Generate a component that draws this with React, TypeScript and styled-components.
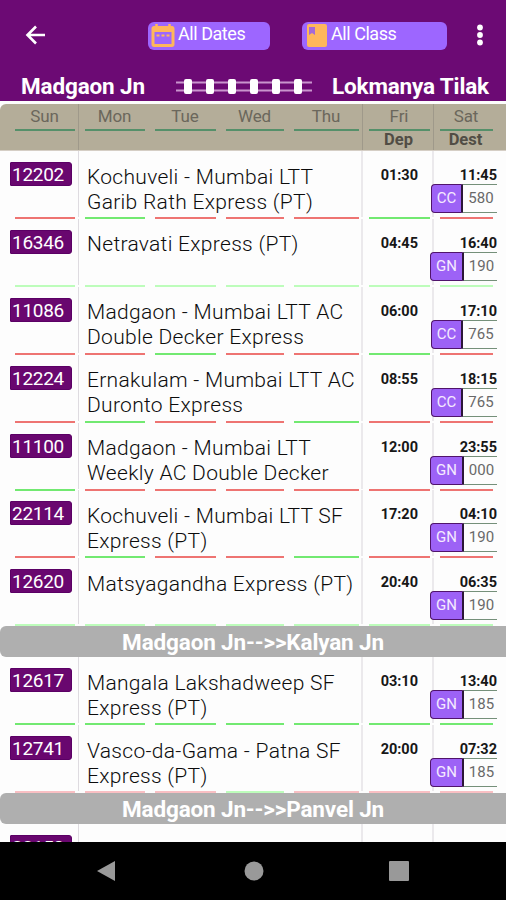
import React from 'react';
import styled, { createGlobalStyle } from 'styled-components';

const Global = createGlobalStyle`
  * { box-sizing: border-box; }
  body { margin: 0; background: #fdfdfd; font-family: Roboto, "Liberation Sans", sans-serif; }
`;

const Screen = styled.div`
  width: 506px;
  height: 900px;
  display: flex;
  flex-direction: column;
  overflow: hidden;
  background: #fdfdfd;
`;

const Header = styled.header`
  flex: none;
  height: 101px;
  background: #6c0a74;
  color: #fff;
`;

const Toolbar = styled.div`
  height: 70px;
  display: flex;
  align-items: flex-start;
  padding: 22px 16px 0 25px;
`;

const BackIcon = styled.svg`
  flex: none;
  width: 21px;
  height: 21px;
  margin: 3px 102px 0 0;
`;

const FilterButton = styled.div<{ $width: number; $gap: number }>`
  flex: none;
  display: flex;
  width: ${(p) => p.$width}px;
  height: 28px;
  margin-right: 32px;
  padding-left: 3px;
  gap: ${(p) => p.$gap}px;
  border-radius: 6px;
  background: #9d66ff;
  font-size: 18px;
  letter-spacing: -0.45px;
  line-height: 24px;
  white-space: nowrap;
`;

const FilterIcon = styled.svg`
  flex: none;
  width: 24px;
  height: 26px;
`;

const FilterLabel = styled.span`
  width: 80px;
`;

const MoreIcon = styled.svg`
  flex: none;
  width: 6px;
  height: 22px;
  margin: 2px 0 0 -2px;
`;

const RouteBar = styled.div`
  display: grid;
  grid-template-columns: 155px 1fr auto;
  align-items: center;
  height: 31px;
  padding: 0 17px 0 21px;
  font-size: 22.5px;
  font-weight: 700;
  letter-spacing: -0.15px;
  white-space: nowrap;
`;

const Track = styled.svg`
  width: 136px;
  height: 18px;
`;

const DayHeader = styled.div`
  flex: none;
  position: relative;
  height: 47px;
  margin-top: 3px;
  border-radius: 6px 0 0 0;
  background: #b4ad99;
  color: #6b675c;
  border-bottom: 1px solid #d5cec5;
`;

const columns = '60px 60px 61px 58px 65px 61px 53px';

const DayGrid = styled.div`
  display: grid;
  grid-template-columns: ${columns};
  column-gap: 10px;
  padding-left: 15px;
  height: 25px;
`;

const Day = styled.div`
  border-bottom: 2px solid #55906a;
  text-align: center;
  font-size: 17px;
  letter-spacing: -0.1px;
  text-indent: -1px;
  line-height: 25px;
`;

const SubGrid = styled(DayGrid)`
  height: 21px;
`;

const SubLabel = styled.div<{ $column: number }>`
  grid-column: ${(p) => p.$column};
  text-align: center;
  text-indent: -2px;
  color: #514d45;
  font-size: 16.5px;
  font-weight: 700;
  line-height: 21px;
`;

const HeaderRule = styled.i<{ $x: number }>`
  position: absolute;
  top: 0;
  bottom: 0;
  left: ${(p) => p.$x}px;
  width: 1px;
  background: #9f998a;
`;

const List = styled.main`
  flex: 1;
  min-height: 0;
  overflow: hidden;
`;

const TrainRow = styled.section`
  height: 67.9px;
  display: flex;
  flex-direction: column;
`;

const RowCells = styled.div`
  flex: none;
  height: 66px;
  display: grid;
  grid-template-columns: 79px 284px 71px 72px;
`;

const Cell = styled.div<{ $last?: boolean; $thin?: boolean }>`
  border-right: ${(p) => (p.$last ? '0' : p.$thin ? '1px solid #dedbe0' : '2px solid #ebe9ec')};
  min-width: 0;
`;

const TrainNumber = styled.div`
  width: 62px;
  height: 24px;
  margin: 11px 0 0 10px;
  padding-left: 1px;
  border: 1px solid #5b0065;
  border-radius: 1px 3px 3px 1px;
  background: #69076f;
  color: #fff;
  font-size: 19px;
  letter-spacing: -0.3px;
  line-height: 23px;
`;

const TrainName = styled.div`
  padding: 13.5px 0 0 8px;
  color: #0c0c0c;
  font-size: 21px;
  font-weight: 300;
  line-height: 25px;
  letter-spacing: 0.3px;
  white-space: pre;
`;

const Time = styled.div<{ $arrival?: boolean }>`
  padding-right: ${(p) => (p.$arrival ? 9 : 14)}px;
  padding-top: 16px;
  text-align: right;
  font-size: 14.5px;
  font-weight: 700;
  line-height: 17px;
  color: #171717;
`;

const Fare = styled.div<{ $general: boolean }>`
  display: grid;
  grid-template-columns: ${(p) => (p.$general ? '34px 33px' : '32px 34px')};
  height: 28px;
  width: 67px;
  margin-left: ${(p) => (p.$general ? -4 : -3)}px;
  font-size: 15px;
  line-height: 27px;
  text-align: center;
`;

const FareClass = styled.span`
  border: 1px solid #50146b;
  border-right: 2px solid #2c1638;
  border-radius: 4px 0 0 4px;
  background: #9d62f6;
  color: #f5eaff;
`;

const FarePrice = styled.span`
  border: solid #75907a;
  border-width: 1px 0;
  background: #fdfdfd;
  color: #696969;
  padding-left: 2px;
`;

const Availability = styled.div`
  flex: none;
  display: grid;
  grid-template-columns: ${columns};
  column-gap: 10px;
  padding-left: 15px;
`;

const DayMark = styled.i<{ $runs: boolean; $pale?: boolean }>`
  height: 2px;
  background: ${(p) => (p.$pale ? (p.$runs ? '#bdfdbb' : '#f9bfc3') : p.$runs ? '#72e971' : '#ee7472')};
`;

const SectionBanner = styled.div`
  position: relative;
  height: 31px;
  border-radius: 6px 0 0 6px;
  background: #afafaf;
  color: #fff;
  font-size: 22.5px;
  font-weight: 700;
  letter-spacing: -0.15px;
  line-height: 33px;
  text-align: center;
`;

const NavBar = styled.nav`
  flex: none;
  height: 58px;
  display: grid;
  grid-template-columns: 147px 145px 20px;
  align-items: center;
  padding-left: 97px;
  background: #000;
`;

const NavIcon = styled.svg`
  width: 20px;
  height: 22px;
`;

type Train = {
  no: string;
  name: string;
  dep: string;
  arr: string;
  cls: 'CC' | 'GN';
  fare: string;
  days: string;
  pale?: boolean;
};

const direct: Train[] = [
  { no: '12202', name: 'Kochuveli - Mumbai LTT\nGarib Rath Express (PT)', dep: '01:30', arr: '11:45', cls: 'CC', fare: '580', days: '0100010' },
  { no: '16346', name: 'Netravati Express (PT)', dep: '04:45', arr: '16:40', cls: 'GN', fare: '190', days: '1111111', pale: true },
  { no: '11086', name: 'Madgaon - Mumbai LTT AC\nDouble Decker Express', dep: '06:00', arr: '17:10', cls: 'CC', fare: '765', days: '0010010' },
  { no: '12224', name: 'Ernakulam - Mumbai LTT AC\nDuronto Express', dep: '08:55', arr: '18:15', cls: 'CC', fare: '765', days: '0100100' },
  { no: '11100', name: 'Madgaon - Mumbai LTT\nWeekly AC Double Decker', dep: '12:00', arr: '23:55', cls: 'GN', fare: '000', days: '1000000' },
  { no: '22114', name: 'Kochuveli - Mumbai LTT SF\nExpress (PT)', dep: '17:20', arr: '04:10', cls: 'GN', fare: '190', days: '0100100' },
  { no: '12620', name: 'Matsyagandha Express (PT)', dep: '20:40', arr: '06:35', cls: 'GN', fare: '190', days: '1111111', pale: true },
];

const viaKalyan: Train[] = [
  { no: '12617', name: 'Mangala Lakshadweep SF\nExpress (PT)', dep: '03:10', arr: '13:40', cls: 'GN', fare: '185', days: '1111111' },
  { no: '12741', name: 'Vasco-da-Gama - Patna SF\nExpress (PT)', dep: '20:00', arr: '07:32', cls: 'GN', fare: '185', days: '0001000', pale: true },
];

const viaPanvel: Train[] = [
  { no: '22150', name: '', dep: '', arr: '', cls: 'GN', fare: '', days: '0000000' },
];

function Trains({ items }: { items: Train[] }) {
  return (
    <>
      {items.map((t) => (
        <TrainRow key={t.no}>
          <RowCells>
            <Cell $thin><TrainNumber>{t.no}</TrainNumber></Cell>
            <Cell><TrainName>{t.name}</TrainName></Cell>
            <Cell><Time>{t.dep}</Time></Cell>
            <Cell $last>
              <Time $arrival>{t.arr}</Time>
              {t.fare && (
                <Fare $general={t.cls === 'GN'}>
                  <FareClass>{t.cls}</FareClass>
                  <FarePrice>{t.fare}</FarePrice>
                </Fare>
              )}
            </Cell>
          </RowCells>
          <Availability>
            {[...t.days].map((d, i) => <DayMark key={i} $runs={d === '1'} $pale={t.pale} />)}
          </Availability>
        </TrainRow>
      ))}
    </>
  );
}

export default function App() {
  return (
    <>
      <Global />
      <Screen>
        <Header>
          <Toolbar>
            <BackIcon viewBox="0 0 21 21" fill="none" stroke="#fff" strokeWidth="2.6">
              <path d="M20 10H2.500M11 1.500L2.500 10l8.500 8.500" />
            </BackIcon>
            <FilterButton $width={122} $gap={3}>
              <FilterIcon viewBox="0 0 24 26">
                <path fill="#ffb75c" fillRule="evenodd" d="M3 4h18c1.500 0 2.500 1 2.500 2.500v16c0 1.500-1 2.500-2.500 2.500H3c-1.500 0-2.500-1-2.500-2.500v-16C.5 5 1.500 4 3 4zM3.500 10v12h17V10z" />
                <path stroke="#ffb75c" strokeWidth="2.500" d="M5.500 2v4M18.500 2v4" />
                <path stroke="#ffb75c" strokeWidth="2.200" strokeDasharray="3 2" d="M5.500 13.500h13" />
              </FilterIcon>
              <FilterLabel>All Dates</FilterLabel>
            </FilterButton>
            <FilterButton $width={145} $gap={2}>
              <FilterIcon viewBox="0 0 24 26">
                <rect x="2" y="2" width="20" height="23" rx="2" fill="#ffb75c" />
                <path d="M4 5h6v8l-3-2-3 2z" fill="#a569d8" />
              </FilterIcon>
              <FilterLabel>All Class</FilterLabel>
            </FilterButton>
            <MoreIcon viewBox="0 0 6 22" fill="#fff">
              <circle cx="3" cy="3.500" r="2.900" />
              <circle cx="3" cy="11" r="2.900" />
              <circle cx="3" cy="18.500" r="2.900" />
            </MoreIcon>
          </Toolbar>
          <RouteBar>
            <span>Madgaon Jn</span>
            <Track viewBox="0 0 136 18">
              <path d="M0 5.500h136M0 13.500h136" stroke="#c995cd" strokeWidth="1.800" />
              {[8, 30, 52, 74, 96, 118].map((x) => (
                <rect key={x} x={x} y="2" width="8" height="15" rx="2" fill="#fff" />
              ))}
            </Track>
            <span>Lokmanya Tilak</span>
          </RouteBar>
        </Header>
        <DayHeader>
          <DayGrid>
            {['Sun', 'Mon', 'Tue', 'Wed', 'Thu', 'Fri', 'Sat'].map((d) => <Day key={d}>{d}</Day>)}
          </DayGrid>
          <SubGrid>
            <SubLabel $column={6}>Dep</SubLabel>
            <SubLabel $column={7}>Dest</SubLabel>
          </SubGrid>
          <HeaderRule $x={78} />
          <HeaderRule $x={362} />
          <HeaderRule $x={433} />
        </DayHeader>
        <List>
          <Trains items={direct} />
          <SectionBanner>Madgaon Jn--&gt;&gt;Kalyan Jn</SectionBanner>
          <Trains items={viaKalyan} />
          <SectionBanner>Madgaon Jn--&gt;&gt;Panvel Jn</SectionBanner>
          <Trains items={viaPanvel} />
        </List>
        <NavBar>
          <NavIcon viewBox="0 0 20 22">
            <path d="M0 11L18 1v20z" fill="#999" />
          </NavIcon>
          <NavIcon viewBox="0 0 20 22">
            <circle cx="10" cy="11" r="9.500" fill="#999" />
          </NavIcon>
          <NavIcon viewBox="0 0 20 22">
            <rect y="1" width="20" height="20" rx="1" fill="#999" />
          </NavIcon>
        </NavBar>
      </Screen>
    </>
  );
}
